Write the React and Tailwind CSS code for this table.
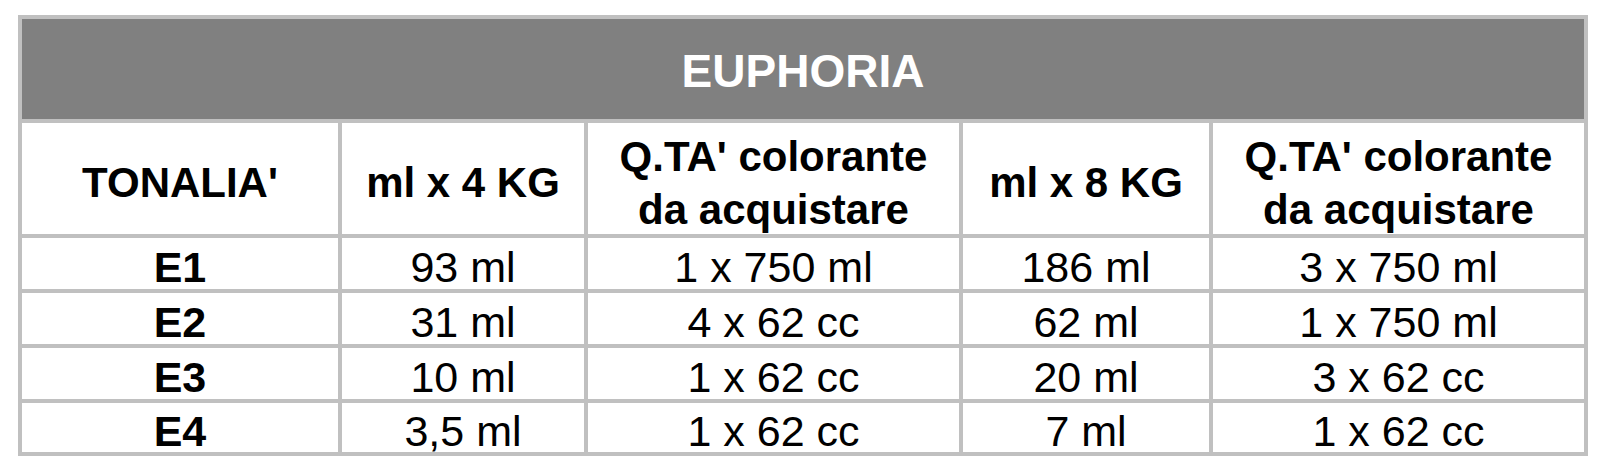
import React from 'react';

const rows = [
  ['E1', '93 ml', '1 x 750 ml', '186 ml', '3 x 750 ml'],
  ['E2', '31 ml', '4 x 62 cc', '62 ml', '1 x 750 ml'],
  ['E3', '10 ml', '1 x 62 cc', '20 ml', '3 x 62 cc'],
  ['E4', '3,5 ml', '1 x 62 cc', '7 ml', '1 x 62 cc'],
];

const headers = ["TONALIA'", 'ml x 4 KG', "Q.TA' colorante da acquistare", 'ml x 8 KG', "Q.TA' colorante da acquistare"];

const Cell = ({ children, bold }) => (
  <div
    className={`bg-white flex items-center justify-center text-center text-black text-[43px] leading-none pt-[8px] ${
      bold ? 'font-bold' : ''
    }`}
  >
    {children}
  </div>
);

export default function App() {
  return (
    <div
      className="min-h-[474px] bg-white pl-[18px] pt-[15px]"
      style={{ fontFamily: '"Liberation Sans", Arial, sans-serif' }}
    >
      <div className="grid w-[1570px] grid-cols-[316px_242px_371px_246px_371px] grid-rows-[100px_111px_51px_51px_51px_49px] gap-[4px] bg-[#c0c0c0] p-[4px]">
        {/* title bar */}
        <div className="col-span-5 bg-[#808080] flex items-center justify-center pt-[4px] text-white font-bold text-[46px] leading-none">
          EUPHORIA
        </div>

        {headers.map((h, i) => (
          <div
            key={i}
            className="bg-white flex items-center justify-center text-center text-black font-bold text-[42px] leading-[53px] px-2 pt-[8px]"
          >
            {h.includes('colorante') ? (
              <span>
                Q.TA' colorante
                <br />
                da acquistare
              </span>
            ) : (
              h
            )}
          </div>
        ))}

        {rows.map((r) =>
          r.map((v, j) => (
            <Cell key={r[0] + j} bold={j === 0}>
              {v}
            </Cell>
          ))
        )}
      </div>
    </div>
  );
}
